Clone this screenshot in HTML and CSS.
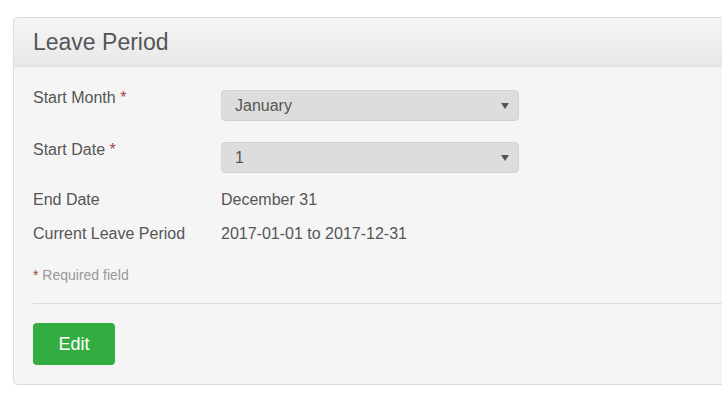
FILE: index.html
```html
<!DOCTYPE html>
<html lang="en">
<head>
<meta charset="utf-8">
<title>Leave Period</title>
<link rel="stylesheet" href="styles.css">
</head>
<body>
<div class="panel">
  <div class="panel-heading">
    <h1 class="panel-title">Leave Period</h1>
  </div>
  <div class="panel-body">
    <div class="field">
      <div class="label">Start Month <span class="req">*</span></div>
      <div class="select"><span>January</span><i class="caret"></i></div>
    </div>
    <div class="field">
      <div class="label">Start Date <span class="req">*</span></div>
      <div class="select"><span>1</span><i class="caret"></i></div>
    </div>
    <div class="info first">
      <div class="label">End Date</div>
      <div class="value">December 31</div>
    </div>
    <div class="info">
      <div class="label">Current Leave Period</div>
      <div class="value">2017-01-01 to 2017-12-31</div>
    </div>
    <p class="note"><span class="req">*</span> Required field</p>
    <hr class="divider">
    <button class="btn-edit" type="button">Edit</button>
  </div>
</div>
</body>
</html>
```
FILE: styles.css
```css
html, body {
  margin: 0;
  padding: 0;
  background: #ffffff;
  overflow: hidden;
}
body {
  font-family: "Liberation Sans", Arial, sans-serif;
  color: #555555;
}
.panel {
  margin: 17px 0 0 13px;
  width: 760px;
  border: 1px solid #dddddd;
  border-radius: 4px;
  background: #f5f5f5;
}
.panel-heading {
  height: 48px;
  padding: 0 19px;
  border-bottom: 1px solid #dddddd;
  border-radius: 4px 4px 0 0;
  background: linear-gradient(to bottom, #f5f5f5 0%, #e8e8e8 100%);
}
.panel-title {
  margin: 0;
  font-size: 23px;
  font-weight: normal;
  line-height: 48px;
  color: #555555;
}
.panel-body {
  padding: 23px 20px 19px 19px;
}
.field {
  display: grid;
  grid-template-columns: 188px 298px;
  align-items: start;
  margin-bottom: 21px;
}
.label {
  font-size: 16px;
  line-height: 16px;
  color: #555555;
}
.req {
  color: #a94442;
}
.select {
  height: 31px;
  box-sizing: border-box;
  border: 1px solid #d3d3d3;
  border-radius: 4px;
  background: #dddddd;
  display: flex;
  align-items: center;
  justify-content: space-between;
  padding: 0 9px 0 13px;
  font-size: 16px;
  color: #555555;
}
.caret {
  width: 0;
  height: 0;
  border-left: 4px solid transparent;
  border-right: 4px solid transparent;
  border-top: 6px solid #555555;
  margin-top: 1px;
}
.info {
  display: grid;
  grid-template-columns: 188px auto;
  margin-bottom: 14px;
}
.info.first {
  margin-top: -4px;
}
.info .label,
.info .value {
  font-size: 16px;
  line-height: 20px;
}
.note {
  margin: 21px 0 0;
  font-size: 14px;
  line-height: 20px;
  color: #999999;
}
.divider {
  margin: 18px 0 19px;
  border: 0;
  border-top: 1px solid #dddddd;
  height: 0;
}
.btn-edit {
  display: block;
  width: 82px;
  height: 42px;
  border: 0;
  border-radius: 4px;
  background: #33ad40;
  color: #ffffff;
  font-family: "Liberation Sans", Arial, sans-serif;
  font-size: 18px;
  padding: 0;
  cursor: pointer;
}
```
